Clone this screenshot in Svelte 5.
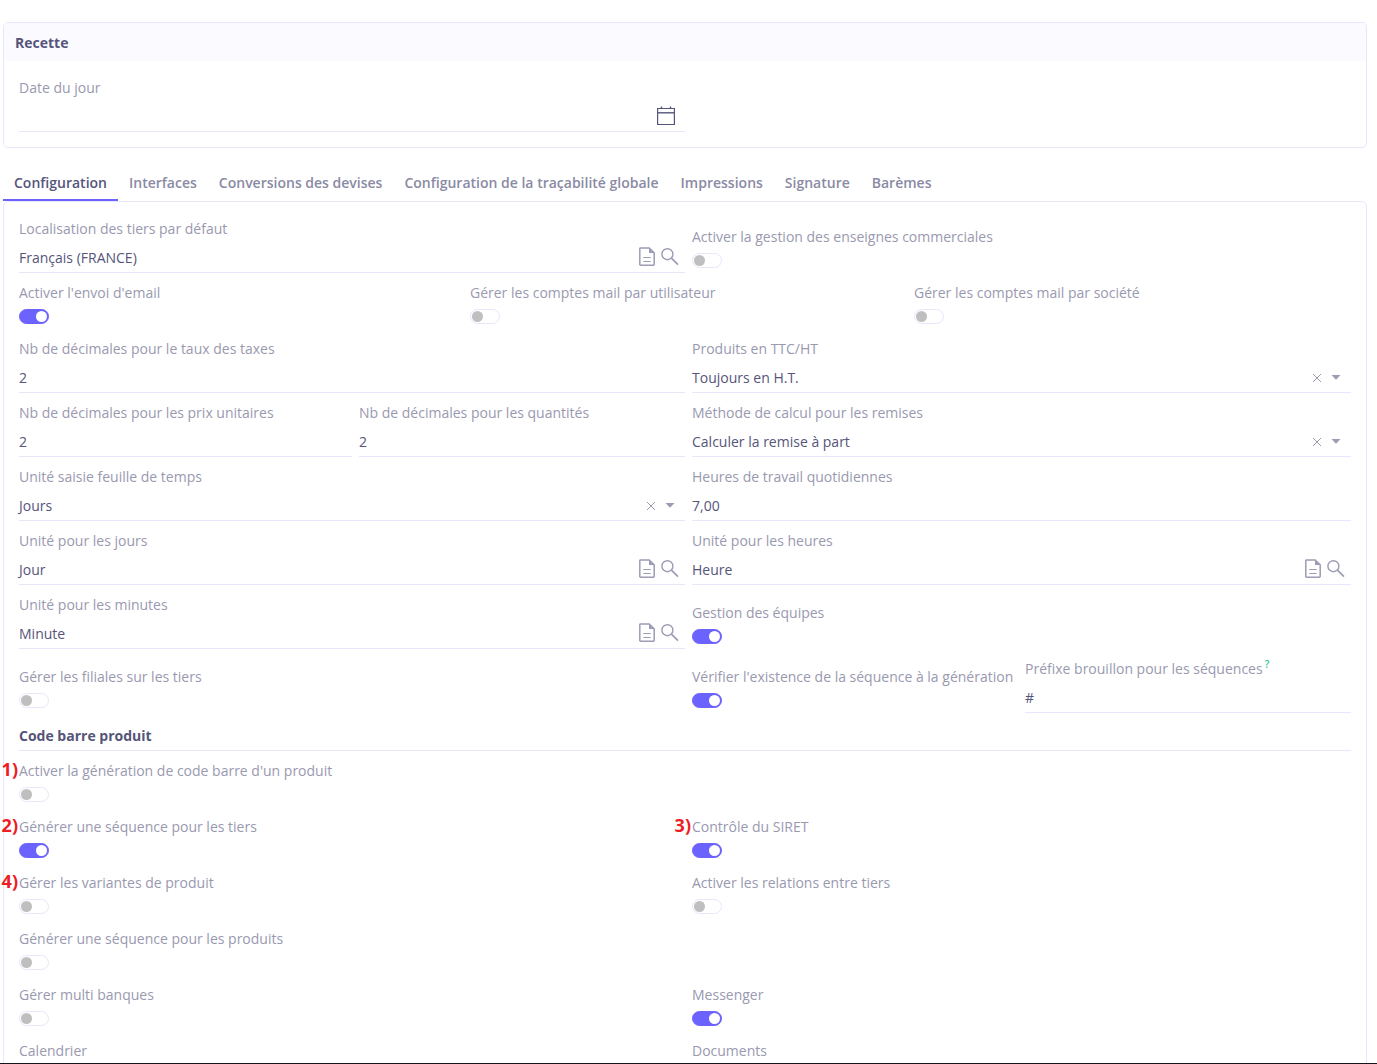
<script>
  const tabs = [
    'Configuration',
    'Interfaces',
    'Conversions des devises',
    'Configuration de la traçabilité globale',
    'Impressions',
    'Signature',
    'Barèmes'
  ];

  let activeTab = $state('Configuration');
  let date = $state('');

  // span is counted on a 12 column grid, first marks the start of a row
  let fields = $state([
    { id: 'localization', type: 'ref', label: 'Localisation des tiers par défaut', value: 'Français (FRANCE)', span: 6, first: true },
    { id: 'trading-names', type: 'toggle', label: 'Activer la gestion des enseignes commerciales', value: false, span: 6 },

    { id: 'send-email', type: 'toggle', label: "Activer l'envoi d'email", value: true, span: 4, first: true },
    { id: 'mail-user', type: 'toggle', label: 'Gérer les comptes mail par utilisateur', value: false, span: 4 },
    { id: 'mail-company', type: 'toggle', label: 'Gérer les comptes mail par société', value: false, span: 4 },

    { id: 'tax-decimals', type: 'text', label: 'Nb de décimales pour le taux des taxes', value: '2', span: 6, first: true },
    { id: 'ati-wt', type: 'select', label: 'Produits en TTC/HT', value: 'Toujours en H.T.', options: ['Toujours en H.T.'], span: 6 },

    { id: 'price-decimals', type: 'text', label: 'Nb de décimales pour les prix unitaires', value: '2', span: 3, first: true },
    { id: 'qty-decimals', type: 'text', label: 'Nb de décimales pour les quantités', value: '2', span: 3 },
    { id: 'discount', type: 'select', label: 'Méthode de calcul pour les remises', value: 'Calculer la remise à part', options: ['Calculer la remise à part'], span: 6 },

    { id: 'timesheet-unit', type: 'select', label: 'Unité saisie feuille de temps', value: 'Jours', options: ['Jours', 'Heures', 'Minutes'], span: 6, first: true },
    { id: 'daily-hours', type: 'text', label: 'Heures de travail quotidiennes', value: '7,00', span: 6 },

    { id: 'unit-days', type: 'ref', label: 'Unité pour les jours', value: 'Jour', span: 6, first: true },
    { id: 'unit-hours', type: 'ref', label: 'Unité pour les heures', value: 'Heure', span: 6 },

    { id: 'unit-minutes', type: 'ref', label: 'Unité pour les minutes', value: 'Minute', span: 6, first: true },
    { id: 'teams', type: 'toggle', label: 'Gestion des équipes', value: true, span: 6 },

    { id: 'subsidiaries', type: 'toggle', label: 'Gérer les filiales sur les tiers', value: false, span: 6, first: true },
    { id: 'check-sequence', type: 'toggle', label: "Vérifier l'existence de la séquence à la génération", value: true, span: 3 },
    { id: 'draft-prefix', type: 'text', label: 'Préfixe brouillon pour les séquences', value: '#', span: 3, help: true },

    { id: 'barcode-title', type: 'heading', label: 'Code barre produit', span: 12, first: true },

    { id: 'barcode', type: 'toggle', label: "Activer la génération de code barre d'un produit", value: false, span: 12, first: true, mark: '1)' },

    { id: 'partner-sequence', type: 'toggle', label: 'Générer une séquence pour les tiers', value: true, span: 6, first: true, mark: '2)' },
    { id: 'siret', type: 'toggle', label: 'Contrôle du SIRET', value: true, span: 6, mark: '3)' },

    { id: 'variants', type: 'toggle', label: 'Gérer les variantes de produit', value: false, span: 6, first: true, mark: '4)' },
    { id: 'relations', type: 'toggle', label: 'Activer les relations entre tiers', value: false, span: 6 },

    { id: 'product-sequence', type: 'toggle', label: 'Générer une séquence pour les produits', value: false, span: 12, first: true },

    { id: 'multi-banks', type: 'toggle', label: 'Gérer multi banques', value: false, span: 6, first: true },
    { id: 'messenger', type: 'toggle', label: 'Messenger', value: true, span: 6 },

    { id: 'calendar', type: 'toggle', label: 'Calendrier', value: false, span: 6, first: true },
    { id: 'documents', type: 'toggle', label: 'Documents', value: false, span: 6 }
  ]);
</script>

<main class="page">
  <section class="panel">
    <h2 class="panel-header">Recette</h2>
    <div class="panel-body panel-body--short">
      <div class="cell span-6 first">
        <label class="label" for="today">Date du jour</label>
        <div class="control">
          <input id="today" type="text" bind:value={date} />
          <button type="button" class="icon icon--date" aria-label="Choisir une date">
            <svg width="18" height="20" viewBox="0 0 18 20" fill="none" stroke="currentColor">
              <path d="M0.6 2.5h16.8v16H0.6z" stroke-width="1.2" />
              <path d="M0.6 6.8h16.8" stroke-width="1.4" />
              <path d="M4.5 0.5v2M13.5 0.5v2" stroke-width="1.4" />
            </svg>
          </button>
        </div>
      </div>
    </div>
  </section>

  <div class="tabs" role="tablist">
    {#each tabs as tab}
      <button
        type="button"
        role="tab"
        class="tab"
        class:tab--active={tab === activeTab}
        aria-selected={tab === activeTab}
        onclick={() => (activeTab = tab)}
      >
        {tab}
      </button>
    {/each}
  </div>

  <section class="panel">
    <div class="panel-body">
      {#each fields as field (field.id)}
        <div class="cell span-{field.span}" class:first={field.first}>
          {#if field.type === 'heading'}
            <h3 class="heading">{field.label}</h3>
          {:else}
            <label class="label" for={field.id}>
              {#if field.mark}<span class="mark">{field.mark}</span>{/if}{field.label}{#if field.help}<span class="help">?</span>{/if}
            </label>
            {#if field.type === 'toggle'}
              <input id={field.id} class="toggle" type="checkbox" role="switch" bind:checked={field.value} />
            {:else if field.type === 'select'}
              <div class="control">
                <select id={field.id} bind:value={field.value}>
                  <option value=""></option>
                  {#each field.options as option}
                    <option value={option}>{option}</option>
                  {/each}
                </select>
                <button type="button" class="icon icon--clear" aria-label="Effacer" onclick={() => (field.value = '')}>
                  <svg width="10" height="10" viewBox="0 0 10 10" stroke="currentColor">
                    <path d="M1 1l8 8M9 1l-8 8" />
                  </svg>
                </button>
                <svg class="caret" width="10" height="5" viewBox="0 0 10 5" fill="currentColor">
                  <path d="M0.5 0h9L5 4.8z" />
                </svg>
              </div>
            {:else}
              <div class="control">
                <input id={field.id} type="text" bind:value={field.value} />
                {#if field.type === 'ref'}
                  <button type="button" class="icon icon--ref" aria-label="Ouvrir">
                    <svg width="16" height="19" viewBox="0 0 16 19" fill="none" stroke="currentColor">
                      <path d="M1.5 0.9h8.7l5 5v11.4q0 0.9-0.9 0.9H1.7q-0.9 0-0.9-0.9V1.6q0-0.7 0.7-0.7z" stroke-width="1.5" />
                      <path d="M10 0.9v5.2h5.2z" fill="currentColor" stroke="none" />
                      <path d="M4.3 10.5h7.4M4.3 14.5h7.4" stroke-width="1.1" />
                    </svg>
                  </button>
                  <button type="button" class="icon icon--ref" aria-label="Rechercher">
                    <svg width="18" height="19" viewBox="0 0 18 19" fill="none" stroke="currentColor">
                      <circle cx="6.4" cy="7.2" r="5.5" stroke-width="1.4" />
                      <path d="M10.4 11.2l6.6 6.4" stroke-width="1.7" />
                    </svg>
                  </button>
                {/if}
              </div>
            {/if}
          {/if}
        </div>
      {/each}
    </div>
  </section>
</main>

<style>
  :global(body) {
    margin: 0;
    background: #fff;
  }

  .page {
    box-sizing: border-box;
    height: 100vh;
    overflow: hidden;
    padding: 22px 10px 0 3px;
    border-bottom: 1px solid #14141c;
    font-family: 'Open Sans', 'Noto Sans', sans-serif;
    font-size: 14px;
    line-height: 20px;
    color: #55557a;
  }

  .panel {
    border: 1px solid #e7e7fb;
    border-radius: 5px;
  }

  .panel-header {
    margin: 0;
    padding: 10px 11px 8px;
    border-radius: 4px 4px 0 0;
    background: #fafaff;
    font-size: 14px;
    font-weight: 700;
  }

  .panel-body {
    display: grid;
    grid-template-columns: repeat(12, minmax(0, 1fr));
    align-items: end;
    padding: 17px 15px 0;
  }

  .panel-body--short {
    padding-bottom: 5px;
  }

  .cell {
    display: flex;
    flex-direction: column;
    align-items: flex-start;
    padding-left: 7px;
  }

  .first {
    padding-left: 0;
  }

  .span-3 {
    grid-column: span 3;
  }

  .span-4 {
    grid-column: span 4;
  }

  .span-6 {
    grid-column: span 6;
  }

  .span-12 {
    grid-column: span 12;
  }

  .label {
    position: relative;
    color: #9999af;
    white-space: nowrap;
  }

  .mark {
    position: absolute;
    right: 100%;
    bottom: 2px;
    margin-right: 1px;
    color: #ee1c25;
    font-size: 18px;
    font-weight: 700;
  }

  .help {
    margin-left: 2px;
    color: #2fc998;
    font-size: 10px;
    font-weight: 600;
    line-height: 1;
    vertical-align: super;
  }

  .control {
    box-sizing: border-box;
    display: flex;
    align-items: center;
    width: 100%;
    height: 30px;
    margin: 4px 0 10px;
    border-bottom: 1px solid #e7e7fb;
  }

  /* the indent keeps the tail of a leading J from being clipped */
  .control input,
  .control select {
    flex: 1;
    min-width: 0;
    height: 29px;
    margin: 0 0 0 -2px;
    padding: 0;
    border: 0;
    outline: 0;
    appearance: none;
    background: transparent;
    color: inherit;
    font: inherit;
    text-indent: 2px;
  }

  .icon {
    display: flex;
    padding: 0 0 2px;
    border: 0;
    background: none;
    color: #9c9cb4;
    cursor: pointer;
  }

  .icon--date {
    margin-right: 10px;
    color: #55557a;
  }

  .icon--ref {
    margin-right: 6px;
  }

  .icon--clear {
    margin-right: 9px;
    padding: 0;
  }

  .caret {
    margin-right: 10px;
    color: #9c9cb4;
  }

  .toggle {
    box-sizing: border-box;
    display: flex;
    align-items: center;
    width: 30px;
    height: 15px;
    margin: 6px 0 15px;
    padding: 0 1px;
    border: 1px solid #e7e7fb;
    border-radius: 8px;
    appearance: none;
    cursor: pointer;
  }

  .toggle::before {
    content: '';
    width: 11px;
    height: 11px;
    border-radius: 50%;
    background: #bfbfbf;
  }

  .toggle:checked {
    justify-content: flex-end;
    border-color: #6c63ff;
    background: #6c63ff;
  }

  .toggle:checked::before {
    background: #fff;
  }

  .heading {
    box-sizing: border-box;
    width: 100%;
    margin: 0 0 10px;
    padding: 3px 0 4px;
    border-bottom: 1px solid #e7e7fb;
    font-size: 14px;
    font-weight: 700;
  }

  .tabs {
    display: flex;
    margin-top: 17px;
  }

  .tab {
    padding: 8px 11px 6px;
    border: 0;
    border-bottom: 2px solid transparent;
    background: none;
    color: #8a8aa5;
    font: inherit;
    font-weight: 600;
    white-space: nowrap;
    cursor: pointer;
  }

  .tab--active {
    border-bottom-color: #6c63ff;
    color: #55557a;
  }
</style>
